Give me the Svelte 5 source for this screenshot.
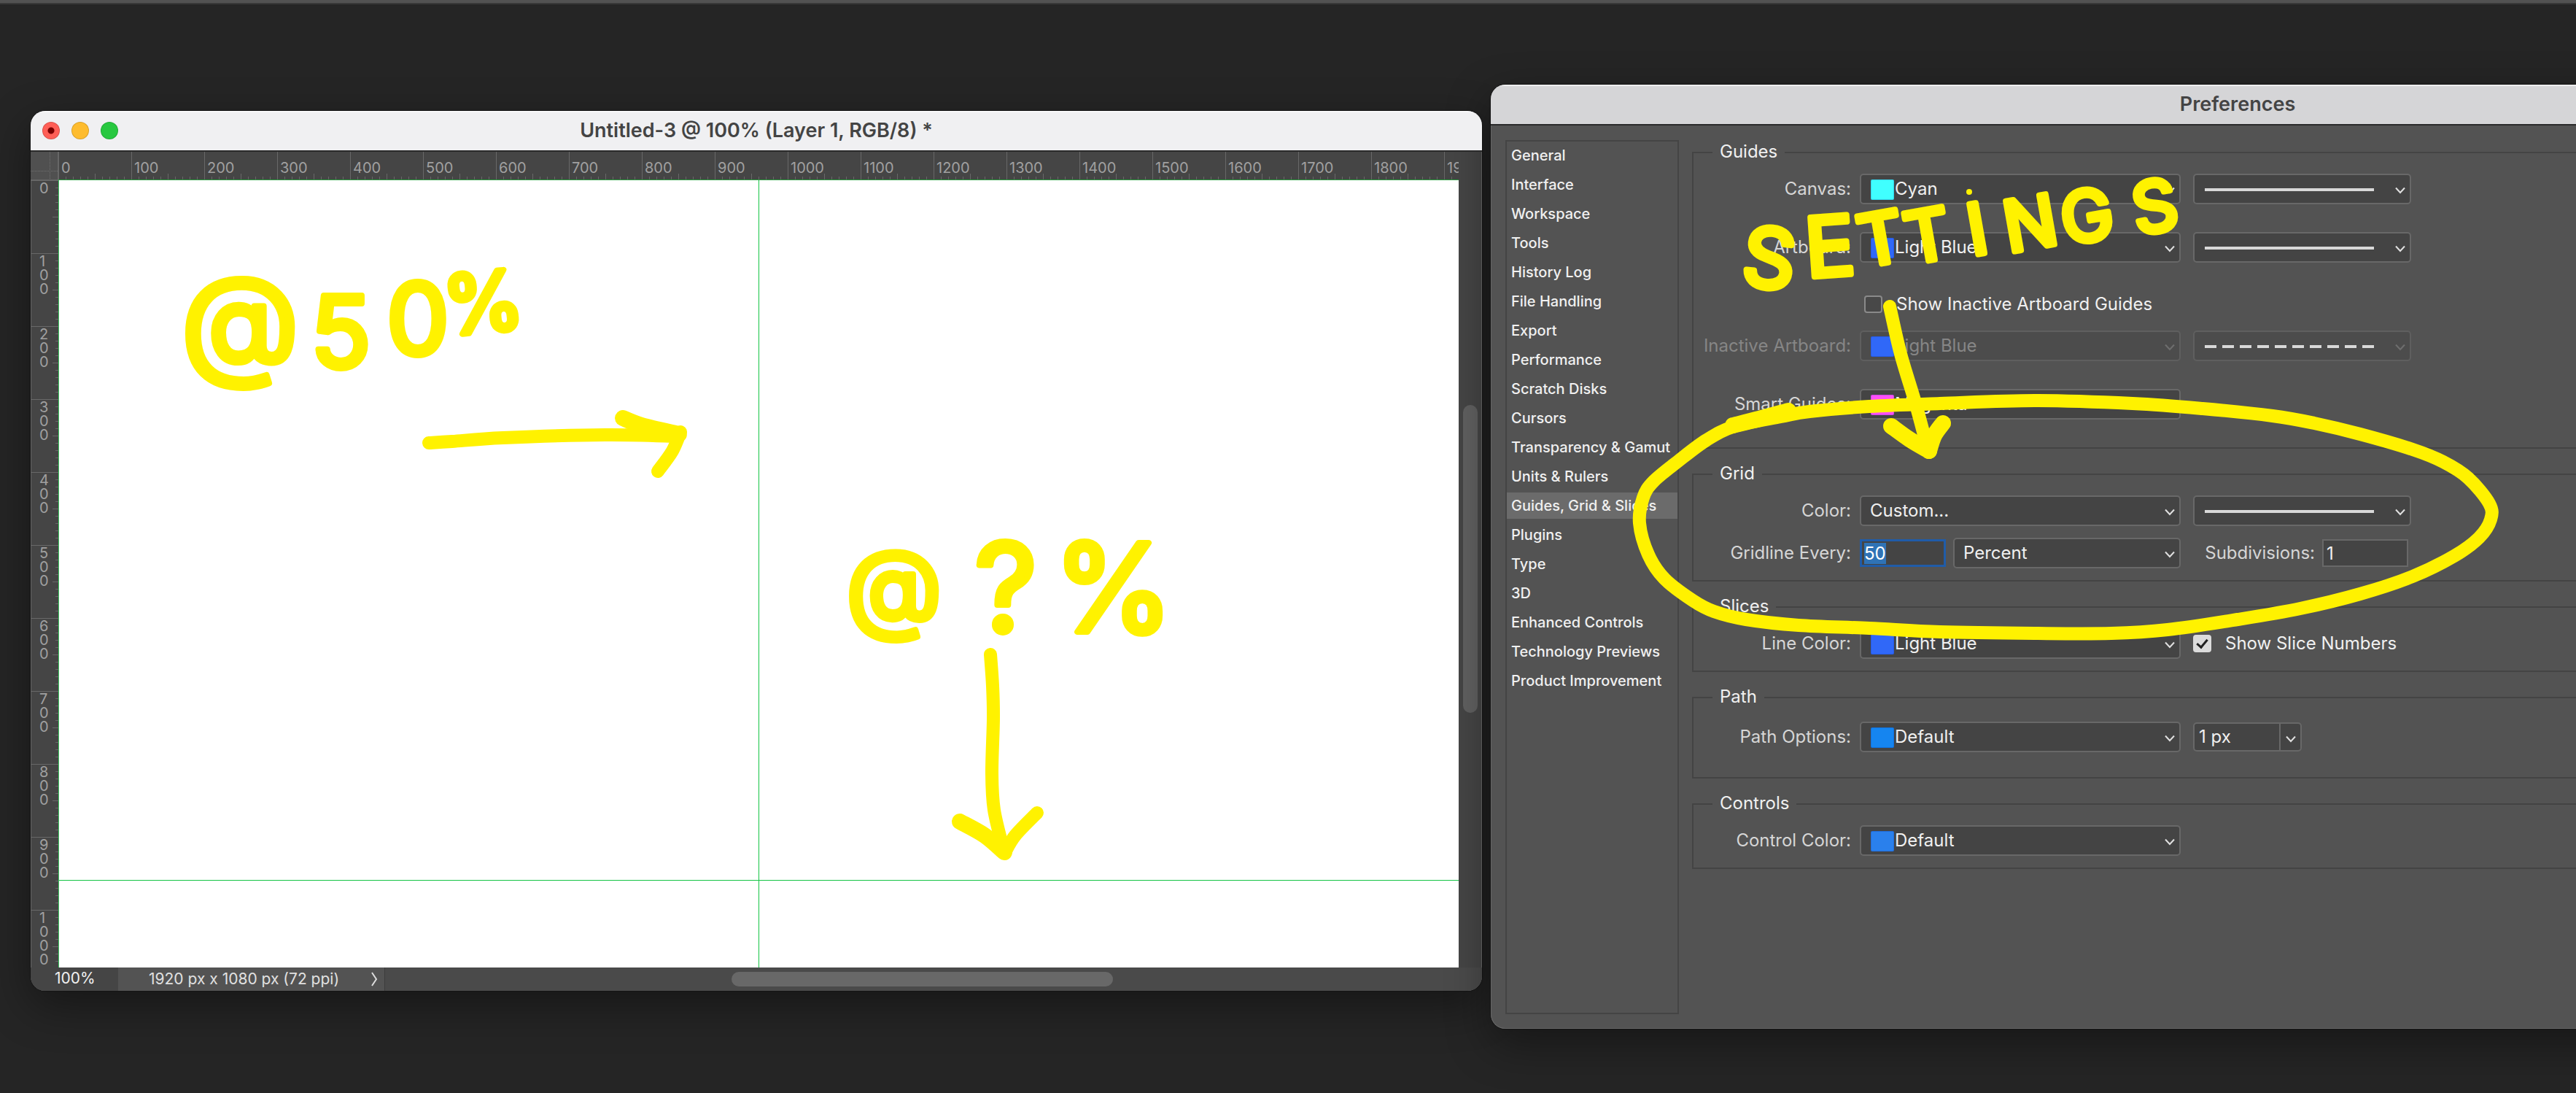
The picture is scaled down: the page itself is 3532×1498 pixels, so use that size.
<script lang="ts">
  import { onMount } from 'svelte';

  type Point = [number, number];

  const sections = [
    'General',
    'Interface',
    'Workspace',
    'Tools',
    'History Log',
    'File Handling',
    'Export',
    'Performance',
    'Scratch Disks',
    'Cursors',
    'Transparency & Gamut',
    'Units & Rulers',
    'Guides, Grid & Slices',
    'Plugins',
    'Type',
    '3D',
    'Enhanced Controls',
    'Technology Previews',
    'Product Improvement',
  ];

  const columns = Array.from({ length: 20 }, (_, i) => String(i * 100));
  const rows = Array.from({ length: 11 }, (_, i) => String(i * 100));

  let active = $state('Guides, Grid & Slices');
  let showInactive = $state(false);
  let showNumbers = $state(true);
  let every = $state('50');
  let subdivisions = $state('1');
  let pathWidth = $state('1 px');
  let everyInput: HTMLInputElement | undefined = $state();

  // The first editable field opens focused, with its value selected.
  onMount(() => {
    everyInput?.focus();
    everyInput?.select();
  });

  // Smooth marker stroke through a list of points (Catmull-Rom to Bézier).
  function smooth(points: Point[], closed = false): string {
    const n = points.length;
    const at = (i: number): Point =>
      closed ? points[(i + n) % n] : points[Math.max(0, Math.min(n - 1, i))];
    let d = `M${points[0].join(' ')}`;
    for (let i = 0; i < (closed ? n : n - 1); i++) {
      const [a, b, c, e] = [at(i - 1), at(i), at(i + 1), at(i + 2)];
      d += `C${b[0] + (c[0] - a[0]) / 6} ${b[1] + (c[1] - a[1]) / 6} ${c[0] - (e[0] - b[0]) / 6} ${c[1] - (e[1] - b[1]) / 6} ${c[0]} ${c[1]}`;
    }
    return d;
  }

  const circle: Point[] = [
    [2379, 584], [2340, 603], [2301, 632], [2267, 660], [2253, 682], [2248, 717],
    [2260, 760], [2282, 793], [2321, 823], [2350, 838], [2394, 849], [2466, 857],
    [2563, 861], [2660, 866], [2790, 868], [2895, 868], [2972, 863], [3068, 849],
    [3154, 834], [3236, 814], [3308, 790], [3365, 762], [3399, 737], [3415, 712],
    [3413, 690], [3384, 655], [3350, 633], [3308, 616], [3236, 595], [3173, 580],
    [3116, 570], [3020, 560], [2924, 553], [2790, 549], [2660, 553], [2563, 557],
    [2481, 564], [2442, 571],
  ];
</script>

{#snippet chevron()}
  <svg class="chevron" viewBox="0 0 14 10" width="14" height="10" aria-hidden="true">
    <path d="M1 1.5 L7 8 L13 1.5" />
  </svg>
{/snippet}

{#snippet dropdown(id: string, value: string, swatch = '', disabled = false)}
  <span class="select" class:disabled class:swatched={swatch !== ''}>
    {#if swatch}<i class="swatch {swatch}"></i>{/if}
    <select {id} {disabled}><option>{value}</option></select>
    {@render chevron()}
  </span>
{/snippet}

{#snippet lineStyle(label: string, dashed = false)}
  <span class="select style" class:disabled={dashed}>
    <svg class="line" viewBox="0 0 232 4" width="232" height="4" aria-hidden="true">
      <path d="M0 2 H232" stroke-dasharray={dashed ? '16 8' : undefined} />
    </svg>
    <select aria-label={label} disabled={dashed}><option value="line" aria-label="Line"></option></select>
    {@render chevron()}
  </span>
{/snippet}

<main class="desktop">
  <section class="window document">
    <header class="titlebar">
      <div class="lights">
        <button type="button" class="light close" aria-label="Close"></button>
        <button type="button" class="light minimize" aria-label="Minimize"></button>
        <button type="button" class="light zoom" aria-label="Zoom"></button>
      </div>
      <h1>Untitled-3 @ 100% (Layer 1, RGB/8) *</h1>
    </header>

    <div class="workspace">
      <div class="origin"></div>
      <div class="ruler across">
        {#each columns as mark (mark)}<span>{mark}</span>{/each}
      </div>
      <div class="gutter"></div>
      <div class="ruler down">
        {#each rows as mark (mark)}
          <div class="mark">{#each mark.split('') as digit}<span>{digit}</span>{/each}</div>
        {/each}
      </div>
      <div class="canvas">
        <i class="guide vertical"></i>
        <i class="guide horizontal"></i>
      </div>
      <div class="gutter"><i class="thumb"></i></div>
    </div>

    <footer class="status">
      <span class="scale">100%</span>
      <button type="button" class="info">
        <span>1920 px x 1080 px (72 ppi)</span>
        <svg viewBox="0 0 10 20" width="10" height="20" aria-hidden="true"><path d="M2 1 L8 10 L2 19" /></svg>
      </button>
      <div class="track"><i class="thumb"></i></div>
    </footer>
  </section>

  <section class="window preferences">
    <header class="titlebar"><h2>Preferences</h2></header>
    <div class="body">
      <nav>
        {#each sections as section (section)}
          <button type="button" class:active={section === active} onclick={() => (active = section)}>
            {section}
          </button>
        {/each}
      </nav>

      <form>
        <fieldset class="guides">
          <legend>Guides</legend>
          <div class="row">
            <label for="canvas-color">Canvas:</label>
            {@render dropdown('canvas-color', 'Cyan', 'cyan')}
            {@render lineStyle('Canvas line style')}
          </div>
          <div class="row">
            <label for="artboard-color">Artboard:</label>
            {@render dropdown('artboard-color', 'Light Blue', 'blue')}
            {@render lineStyle('Artboard line style')}
          </div>
          <div class="row tick">
            <label class="check">
              <input type="checkbox" bind:checked={showInactive} />
              Show Inactive Artboard Guides
            </label>
          </div>
          <div class="row off">
            <label for="inactive-color">Inactive Artboard:</label>
            {@render dropdown('inactive-color', 'Light Blue', 'blue', true)}
            {@render lineStyle('Inactive artboard line style', true)}
          </div>
          <div class="row">
            <label for="smart-color">Smart Guides:</label>
            {@render dropdown('smart-color', 'Magenta', 'magenta')}
          </div>
        </fieldset>

        <fieldset class="grid">
          <legend>Grid</legend>
          <div class="row">
            <label for="grid-color">Color:</label>
            {@render dropdown('grid-color', 'Custom...')}
            {@render lineStyle('Grid line style')}
          </div>
          <div class="row">
            <label for="grid-every">Gridline Every:</label>
            <div class="pair">
              <input id="grid-every" class="field" type="text" bind:this={everyInput} bind:value={every} />
              <span class="select unit">
                <select aria-label="Gridline unit"><option>Percent</option></select>
                {@render chevron()}
              </span>
            </div>
            <label class="subdivisions" for="grid-sub">Subdivisions:</label>
            <input id="grid-sub" class="field" type="text" bind:value={subdivisions} />
          </div>
        </fieldset>

        <fieldset>
          <legend>Slices</legend>
          <div class="row">
            <label for="slice-color">Line Color:</label>
            {@render dropdown('slice-color', 'Light Blue', 'blue')}
            <label class="check">
              <input type="checkbox" bind:checked={showNumbers} />
              Show Slice Numbers
            </label>
          </div>
        </fieldset>

        <fieldset class="path">
          <legend>Path</legend>
          <div class="row">
            <label for="path-color">Path Options:</label>
            {@render dropdown('path-color', 'Default', 'azure')}
            <span class="combo">
              <input type="text" aria-label="Path width" bind:value={pathWidth} />
              <button type="button" aria-label="Path width presets">{@render chevron()}</button>
            </span>
          </div>
        </fieldset>

        <fieldset>
          <legend>Controls</legend>
          <div class="row">
            <label for="control-color">Control Color:</label>
            {@render dropdown('control-color', 'Default', 'sky')}
          </div>
        </fieldset>
      </form>
    </div>
  </section>

  <svg class="marker" viewBox="0 0 3532 1498" aria-hidden="true">
    <g class="note">
      <text class="huge" x="248" y="500">@</text>
      <text class="large" x="426 530" y="504 486">50</text>
      <text class="medium" x="612" y="460" rotate="-6">%</text>
      <text class="large" x="1160" y="852">@</text>
      <text class="huge" x="1336" y="866">?</text>
      <text class="huge" x="1444" y="866">%</text>
      <text class="medium" x="2386 2478" y="390 380" rotate="6 -4">SE</text>
      <text class="small" x="2554 2618 2704 2754 2832 2930" y="366 362 350 346 336 322" rotate="-10">TTINGS</text>
    </g>
    <circle cx="2700" cy="263" r="4" />
    <g class="stroke">
      <path d={smooth([[588, 607], [620, 605], [690, 600], [830, 596], [930, 598]])} />
      <path class="thick" d={smooth([[854, 573], [880, 583], [931, 595]])} />
      <path d={smooth([[933, 592], [922, 618], [902, 646]])} />
      <path d={smooth([[1358, 897], [1361, 940], [1362, 985], [1360, 1060], [1363, 1110], [1376, 1165]])} />
      <path class="thick" d={smooth([[1316, 1126], [1350, 1145], [1377, 1168]])} />
      <path d={smooth([[1422, 1114], [1392, 1145], [1378, 1168]])} />
      <path d={smooth([[2591, 420], [2606, 485], [2627, 555], [2643, 615]])} />
      <path class="thick" d={smooth([[2593, 584], [2618, 602], [2645, 618]])} />
      <path class="thick" d={smooth([[2645, 618], [2652, 597], [2664, 580]])} />
      <path d={smooth(circle, true)} />
      <path class="thick" d={smooth([[2376, 583], [2412, 574], [2452, 563]])} />
    </g>
  </svg>
</main>

<style>
  :global(body) {
    background: #252525;
  }
  .desktop {
    position: relative;
    box-sizing: border-box;
    min-height: 100vh;
    display: grid;
    grid-template-columns: minmax(0, 1fr) 1488px;
    align-items: start;
    column-gap: 12px;
    padding: 112px 0 88px 42px;
    overflow: hidden;
    background: #252525;
    border-top: 4px solid #525252;
    box-shadow: inset 0 2px #383838;
    color: #f0f0f0;
    font-family: Inter, 'Liberation Sans', sans-serif;
    font-size: 24px;
    line-height: 28px;
  }
  button,
  input,
  select {
    box-sizing: border-box;
    margin: 0;
    border: 0;
    color: inherit;
    font: inherit;
  }
  .window {
    border-radius: 20px;
    overflow: hidden;
    box-shadow:
      0 0 0 1px #141414,
      0 20px 60px rgba(0, 0, 0, 0.4),
      inset 0 0 0 1px #666;
  }
  .titlebar {
    position: relative;
    display: flex;
    align-items: center;
    justify-content: center;
    box-sizing: border-box;
    height: 56px;
    border-bottom: 2px solid #2a2a2a;
    box-shadow: inset 0 2px rgba(255, 255, 255, 0.6);
    color: #444;
  }
  h1,
  h2 {
    margin: 0;
    font-size: 27px;
    font-weight: 600;
    line-height: 32px;
  }

  /* Document window */
  .document {
    margin-top: 36px;
    background: #454545;
  }
  .document .titlebar {
    background: #f0f0f2;
  }
  .lights {
    position: absolute;
    left: 16px;
    display: flex;
    gap: 16px;
  }
  .light {
    width: 24px;
    height: 24px;
    padding: 0;
    border: 1px solid rgba(0, 0, 0, 0.14);
    border-radius: 50%;
  }
  .close {
    background: radial-gradient(circle, #7a0000 0 4px, #ff5f57 5px);
  }
  .minimize {
    background: #febc2e;
  }
  .zoom {
    background: #28c840;
  }
  .workspace {
    display: grid;
    grid-template-columns: 38px minmax(0, 1fr) 32px;
    grid-template-rows: 39px 1079px;
    color: #a0a0a0;
    font-size: 20px;
  }
  .origin {
    background:
      linear-gradient(#666, #666) right / 1px 100% no-repeat,
      linear-gradient(#666, #666) bottom / 100% 1px no-repeat,
      repeating-linear-gradient(90deg, #707070 0 1px, transparent 1px 2px) 0 26px / 100% 1px no-repeat,
      repeating-linear-gradient(#707070 0 1px, transparent 1px 2px) 26px 0 / 1px 100% no-repeat,
      #505050;
  }
  .ruler {
    display: flex;
    overflow: hidden;
  }
  .across {
    background:
      repeating-linear-gradient(90deg, #686868 0 1px, transparent 1px 100px),
      repeating-linear-gradient(90deg, #686868 0 1px, transparent 1px 50px) bottom / 100% 8px no-repeat,
      repeating-linear-gradient(90deg, #686868 0 1px, transparent 1px 10px) bottom / 100% 4px no-repeat;
    border-bottom: 1px solid #2a9a3e;
  }
  .across span {
    flex: 0 0 96px;
    padding: 8px 0 0 4px;
  }
  .down {
    flex-direction: column;
    background:
      repeating-linear-gradient(#686868 0 1px, transparent 1px 100px),
      repeating-linear-gradient(#686868 0 1px, transparent 1px 50px) right / 8px 100% no-repeat,
      repeating-linear-gradient(#686868 0 1px, transparent 1px 10px) right / 4px 100% no-repeat;
  }
  .mark {
    flex: 0 0 98px;
    display: flex;
    flex-direction: column;
    padding: 2px 0 0 12px;
    line-height: 19px;
  }
  .canvas {
    position: relative;
    background: #fff;
    border-left: 1px solid #3fc862;
  }
  .guide {
    position: absolute;
    background: #14c444;
  }
  .vertical {
    left: 959px;
    top: 0;
    bottom: 0;
    width: 1px;
  }
  .horizontal {
    top: 959px;
    left: 0;
    right: 0;
    height: 1px;
  }
  .thumb {
    display: block;
    border-radius: 10px;
    background: #686868;
  }
  .gutter .thumb {
    width: 20px;
    height: 422px;
    margin: 308px auto 0 6px;
    background: #606060;
  }
  .status {
    display: flex;
    align-items: stretch;
    height: 32px;
    background: #4a4a4a;
    font-size: 21px;
    line-height: 30px;
  }
  .scale {
    box-sizing: border-box;
    width: 120px;
    padding-left: 33px;
    background: #454545;
  }
  .info {
    display: flex;
    align-items: center;
    justify-content: space-between;
    width: 366px;
    padding: 0 9px 0 42px;
    background: #535353;
    border-right: 1px solid #3c3c3c;
    color: #e0e0e0;
  }
  .info svg {
    fill: none;
    stroke: #ddd;
    stroke-width: 2;
  }
  .track {
    flex: 1;
    padding: 6px 506px 6px 475px;
  }
  .track .thumb {
    height: 20px;
  }

  /* Preferences window */
  .preferences {
    margin-right: -560px;
    background: #535353;
  }
  .preferences .titlebar {
    background: #d5d5d7;
  }
  .body {
    display: flex;
    gap: 18px;
    box-sizing: border-box;
    min-height: 1238px;
    padding: 20px;
  }
  nav {
    flex: 0 0 234px;
    display: flex;
    flex-direction: column;
    gap: 4px;
    padding-top: 1px;
    border: 2px solid #444;
  }
  nav button {
    height: 36px;
    padding: 0 0 0 6px;
    background: none;
    font-size: 20px;
    font-weight: 500;
    text-align: left;
    white-space: nowrap;
    cursor: pointer;
  }
  nav button.active {
    background: #6b6b6b;
  }
  form {
    flex: 1;
    padding-top: 3px;
  }
  fieldset {
    display: flex;
    flex-direction: column;
    margin: 0 0 21px;
    padding: 15px 0 16px;
    border: 2px solid #444;
  }
  legend {
    margin-left: 26px;
    padding: 0 10px 2px;
    line-height: 26px;
  }
  .guides {
    gap: 38px;
    padding-bottom: 38px;
  }
  .grid {
    gap: 16px;
  }
  .path {
    padding: 19px 0 34px;
  }
  .row {
    display: flex;
    align-items: center;
    height: 42px;
  }
  .row > label:first-child:not(.check) {
    width: 216px;
    margin-right: 12px;
    text-align: right;
  }
  label {
    color: #d6d6d6;
    white-space: nowrap;
  }
  .off label {
    color: #868686;
  }
  .row.tick {
    height: 26px;
    margin: 6px 0 -15px;
    padding-left: 234px;
  }
  .check {
    display: flex;
    align-items: center;
    gap: 19px;
    color: #f0f0f0;
  }
  .check input {
    appearance: none;
    width: 25px;
    height: 24px;
    border: 2px solid #8a8a8a;
    border-radius: 4px;
    background: #484848;
  }
  .check input:checked {
    border-color: #dcdcdc;
    background: #dcdcdc;
    display: grid;
    place-items: center;
  }
  .check input:checked::before {
    content: '';
    width: 6px;
    height: 12px;
    margin-top: -4px;
    border: solid #222;
    border-width: 0 3px 3px 0;
    rotate: 40deg;
  }
  .select {
    position: relative;
    display: block;
    width: 440px;
    margin-right: 17px;
  }
  .select select {
    appearance: none;
    display: block;
    width: 100%;
    height: 42px;
    padding: 0 40px 0 12px;
    border: 2px solid #686868;
    border-radius: 5px;
    background: #444;
    color: #f0f0f0;
  }
  .swatched select {
    padding-left: 46px;
  }
  .disabled select {
    border-color: #5f5f5f;
    background: #4c4c4c;
    color: #868686;
    opacity: 1;
  }
  .chevron {
    fill: none;
    stroke: #e0e0e0;
    stroke-width: 2;
  }
  .select .chevron {
    position: absolute;
    right: 8px;
    top: 18px;
    pointer-events: none;
  }
  .disabled .chevron {
    stroke: #6e6e6e;
  }
  .swatch {
    position: absolute;
    left: 15px;
    top: 8px;
    box-sizing: border-box;
    width: 32px;
    height: 28px;
    border: 1px solid rgba(0, 40, 160, 0.2);
    border-radius: 2px;
  }
  .cyan {
    background: #40ffff;
  }
  .blue {
    background: #3068f8;
  }
  .magenta {
    background: #ff50f8;
  }
  .azure {
    background: #1585f0;
  }
  .sky {
    background: #2a80ec;
  }
  .style {
    width: 299px;
    margin-right: 0;
  }
  .line {
    position: absolute;
    left: 16px;
    top: 20px;
    pointer-events: none;
    stroke: #d8d8d8;
    stroke-width: 4;
  }
  .pair {
    display: flex;
    align-items: center;
    gap: 10px;
    width: 440px;
    margin-right: 17px;
  }
  .pair .select {
    flex: 1;
    margin-right: 0;
  }
  .field {
    width: 118px;
    height: 38px;
    padding: 0 4px;
    border: 2px solid #686868;
    background: #444;
    line-height: 30px;
    color: #f0f0f0;
  }
  .field:focus {
    border: 3px solid #205ca8;
    padding: 0 3px;
    outline: none;
  }
  .field::selection {
    background: #2f73b6;
    color: #fff;
  }
  .subdivisions {
    width: 167px;
    margin-right: 10px;
    text-align: right;
  }
  .combo {
    display: flex;
    box-sizing: border-box;
    width: 149px;
    height: 40px;
    border: 2px solid #686868;
    border-radius: 5px;
    background: #444;
  }
  .combo input {
    flex: 1;
    min-width: 0;
    padding: 0 6px;
    background: none;
  }
  .combo button {
    width: 29px;
    padding: 0;
    border-left: 2px solid #686868;
    background: none;
  }

  /* Marker notes over both windows */
  .marker {
    position: absolute;
    left: 0;
    top: -4px;
    width: 100%;
    pointer-events: none;
    fill: #fff200;
  }
  .note {
    font-weight: 400;
    stroke: #fff200;
    stroke-width: 8;
    stroke-linejoin: round;
  }
  .huge {
    font-size: 168px;
  }
  .large {
    font-size: 136px;
  }
  .medium {
    font-size: 112px;
  }
  .small {
    font-size: 96px;
  }
  .stroke {
    fill: none;
    stroke: #fff200;
    stroke-width: 18;
    stroke-linecap: round;
    stroke-linejoin: round;
  }
  .thick {
    stroke-width: 22;
  }
</style>
